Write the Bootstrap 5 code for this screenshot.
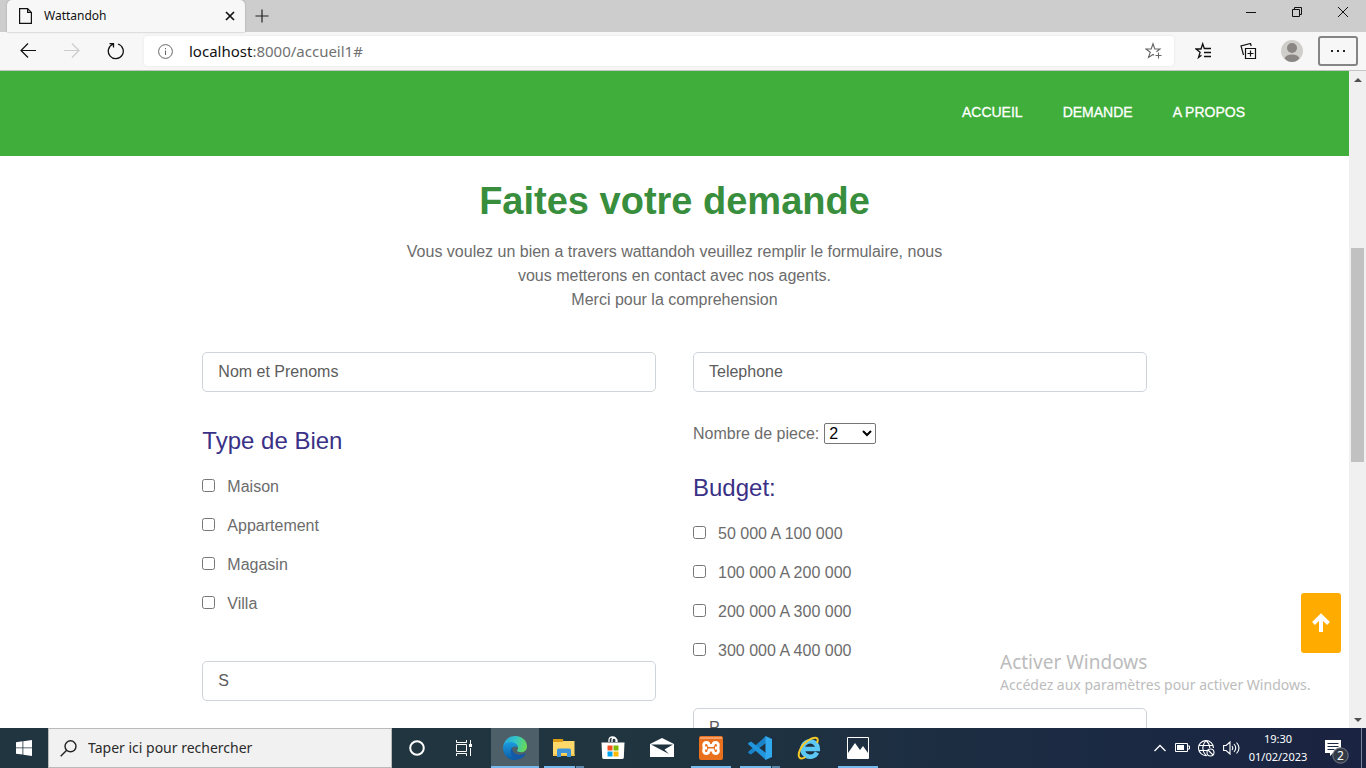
<!DOCTYPE html>
<html lang="fr">
<head>
<meta charset="utf-8">
<meta name="viewport" content="width=device-width, initial-scale=1">
<title>Wattandoh</title>
<link href="https://cdn.jsdelivr.net/npm/bootstrap@5.3.0/dist/css/bootstrap.min.css" rel="stylesheet">
<style>
  body { font-family: "Liberation Sans", Arial, sans-serif; font-size: 16px; line-height: 24px; color: #6c6c6c; background: #fff; }
  svg { display: block; flex: none; }
  .shell-ui { font-family: "Noto Sans", "Open Sans", sans-serif; }
  .plain-btn { border: 0; background: none; padding: 0; color: inherit; display: flex; align-items: center; justify-content: center; }

  /* browser window */
  .tab-strip { height: 32px; background: #cdcdcd; color: #111; }
  .browser-tab { width: 238px; margin-left: 7px; padding: 0 8px 0 12px; background: #f7f7f7; border-radius: 5px 5px 0 0; font-size: 12px; box-shadow: 0 0 2px #999; }
  .new-tab { width: 34px; }
  .win-btn { width: 46px; height: 23px; }
  .tool-bar { height: 39px; background: #f7f7f7; border-bottom: 1px solid #c4c4c4; color: #111; }
  .nav-group { padding-left: 6px; }
  .nav-btn { width: 44px; height: 32px; }
  .address { height: 30px; margin-left: 6px; padding: 0 11px 0 14px; background: #fff; border-radius: 4px; box-shadow: 0 0 3px #e4e4e4; color: #717171; }
  .address-text { font-size: 15px; color: #717171; text-decoration: none; }
  .address-text b { font-weight: 400; color: #111; }
  .more-btn { width: 40px; height: 30px; border: 2px solid #858585; border-radius: 3px; margin: 0 8px 0 4px; }

  /* site */
  .site-header { height: 85px; background: #3fae3a; padding: 0 84px 4px; }
  .site-header .nav-link { color: #fff; font-size: 14px; padding: 0 20px; line-height: 20px; -webkit-text-stroke: .3px #fff; }
  .page-title { font-size: 38px; line-height: 46px; font-weight: 700; color: #388e3c; margin: 22px 0 16px; }
  .intro { max-width: 570px; margin: 0 auto 40px; }
  .request-form { width: 70%; margin: 0 auto; grid-template-columns: 1fr 1fr; gap: 37px; }
  .request-form .form-control { height: 40px; padding: 6px 15px; border: 1px solid #ced4da; border-radius: 5px; color: #5c5c5c; }
  .request-form .form-control::placeholder { color: #5c5c5c; opacity: 1; }
  .group-title { font-size: 24px; line-height: 29px; font-weight: 400; color: #3a3187; margin: 0 0 20px; float: none; }
  .type-group { margin-top: 34px; margin-bottom: 45px; }
  .budget-group { margin-top: 27px; margin-bottom: 45px; }
  .choices { gap: 15px; }
  .choice { gap: 12px; }
  .choice input { width: 13px; height: 13px; margin: 0 0 4px; }
  .rooms { margin-top: 30px; gap: 5px; height: 24px; }
  .rooms select { width: 52px; height: 21px; margin-bottom: 2px; font-size: 16px; padding: 0; color: #000; background: #fff; border: 1px solid #767676; border-radius: 2px; }
  .page-overlay { right: 17px; }
  .to-top { right: 8px; bottom: 75px; width: 40px; height: 60px; background: #ffab00; border-radius: 3px; }
  .watermark { right: 0; bottom: 32px; width: 349px; color: #bcbcbc; font-size: 14px; line-height: 22px; }
  .watermark-title { font-size: 19px; line-height: 24px; }
  .scroll-bar { width: 17px; background: #f0f0f0; }
  .scroll-end { height: 17px; }
  .scroll-thumb { background: #c1c1c1; margin: 0 2px; }

  /* taskbar */
  .task-bar { height: 40px; background: linear-gradient(90deg, #20353f 0, #20353f 45%, #1b2a43 80%, #1a2341); color: #fff; }
  .task-list { gap: 1px; }
  .task-btn { width: 48px; height: 40px; position: relative; flex: none; }
  .task-btn.active { background: #4d5f69; }
  .task-btn.running::after { content: ""; position: absolute; left: 4px; right: 4px; bottom: 0; height: 2px; background: #76b9ed; }
  .task-btn.active::after { left: 0; right: 0; }
  .task-btn.multi::after { background: linear-gradient(90deg, #76b9ed 31px, #20353f 31px, #20353f 32px, #5887ab 32px); }
  .task-search { width: 344px; background: #f1f1f1; border: 1px solid #bababa; margin-right: 1px; color: #222; padding-left: 11px; gap: 11px; }
  .task-search input { border: 0; background: none; outline: 0; font-size: 14px; padding: 0; color: #222; }
  .task-search input::placeholder { color: #2b2b2b; opacity: 1; }
  .tray { gap: 8px; padding-right: 4px; }
  .clock { font-size: 11px; line-height: 18px; width: 60px; }
  .notice { width: 26px; height: 30px; margin: 0 3px 0 8px; }
  .desk-edge { width: 1px; height: 40px; background: #7a8294; }
</style>
</head>
<body>
<div class="d-flex flex-column vh-100 overflow-hidden">

  <header class="shell-ui flex-shrink-0">
    <div class="tab-strip d-flex">
      <div class="browser-tab d-flex align-items-center">
        <svg width="13" height="16" viewBox="0 0 13 16" fill="none" stroke="#111" stroke-width="1.2"><path d="M.6.6h8L12.400 4.400v11H.6zM8.600.6v3.800h3.800"/></svg>
        <span class="ms-2 ps-1 flex-grow-1">Wattandoh</span>
        <button class="plain-btn" aria-label="Fermer l'onglet"><svg width="14" height="14" viewBox="0 0 14 14" stroke="#111" stroke-width="1.700"><path d="M3 3l8 8M11 3l-8 8"/></svg></button>
      </div>
      <button class="plain-btn new-tab" aria-label="Nouvel onglet"><svg width="14" height="14" viewBox="0 0 14 14" stroke="#222" stroke-width="1.200"><path d="M7 .5v13M.5 7h13"/></svg></button>
      <div class="d-flex ms-auto">
        <button class="plain-btn win-btn" aria-label="Réduire"><svg width="10" height="10" stroke="#111"><path d="M0 5.500h10"/></svg></button>
        <button class="plain-btn win-btn" aria-label="Restaurer"><svg width="10" height="10" fill="none" stroke="#111"><path d="M.5 2.500h7v7h-7zM2.500 2.500v-2h7v7h-2"/></svg></button>
        <button class="plain-btn win-btn" aria-label="Fermer"><svg width="10" height="10" stroke="#111"><path d="M0 0l10 10M10 0L0 10"/></svg></button>
      </div>
    </div>
    <div class="tool-bar d-flex align-items-center">
      <div class="nav-group d-flex">
        <button class="plain-btn nav-btn" aria-label="Précédent"><svg width="16" height="16" viewBox="0 0 16 16" fill="none" stroke="#111" stroke-width="1.200"><path d="M16 7.500H1M8 .5L1 7.500l7 7"/></svg></button>
        <button class="plain-btn nav-btn" aria-label="Suivant"><svg width="16" height="16" viewBox="0 0 16 16" fill="none" stroke="#ccc" stroke-width="1.200"><path d="M0 7.500h15M8 .5l7 7-7 7"/></svg></button>
        <button class="plain-btn nav-btn" aria-label="Actualiser"><svg width="18" height="18" viewBox="0 0 18 18" fill="none" stroke="#111" stroke-width="1.300"><path d="M11 2a7.500 7.500 0 1 1-5 .2M2.500 1.600H6.500V5.600"/></svg></button>
      </div>
      <div class="address d-flex align-items-center flex-grow-1">
        <svg width="15" height="15" viewBox="0 0 15 15" fill="none" stroke="#666"><circle cx="7.500" cy="7.500" r="6.900"/><path d="M7.500 6.500v4.500M7.500 4v1.200"/></svg>
        <a href="#" class="address-text ms-3 flex-grow-1"><b>localhost</b>:8000/accueil1#</a>
        <button class="plain-btn" aria-label="Ajouter aux favoris"><svg width="18" height="18" viewBox="0 0 18 18" fill="none" stroke="#666" stroke-width="1.100"><path d="M9 13.300l-1-.8L3.500 15.500l1.800-5.300L1 7h5.200L8 1.800 9.800 7H15l-3.600 2.800M13.500 10.500v6M10.500 13.500h6"/></svg></button>
      </div>
      <button class="plain-btn nav-btn ms-2" aria-label="Favoris"><svg width="18" height="18" viewBox="0 0 18 18" fill="none" stroke="#111" stroke-width="1.300"><path d="M6.500 13.300L3.500 15.500l1.600-5.300L1 7h5L7.700 1.800 9.300 6.500H16M9 10.500H16M9 14.500H16"/></svg></button>
      <button class="plain-btn nav-btn" aria-label="Collections"><svg width="17" height="17" viewBox="0 0 17 17" fill="none" stroke="#111" stroke-width="1.200"><path d="M5.500 5.500h10v10h-10zM10.500 7.500v6M7.500 10.500h6M3.500 12L1 3l9.500-2.500.7 2.500"/></svg></button>
      <button class="plain-btn nav-btn" aria-label="Profil"><svg width="22" height="22" viewBox="0 0 22 22"><circle cx="11" cy="11" r="11" fill="#d0cecb"/><circle cx="11" cy="8" r="5" fill="#8a8683"/><path d="M3.500 18.500Q5 14.500 11 14.500t7.500 4Q15 22 11 22t-7.500-3.500z" fill="#8a8683"/></svg></button>
      <button class="plain-btn more-btn" aria-label="Paramètres"><svg width="14" height="2" fill="#222"><path d="M0 0h2v2H0zM6 0h2v2H6zM12 0h2v2h-2z"/></svg></button>
    </div>
  </header>

  <div class="d-flex flex-grow-1 overflow-hidden position-relative">
    <main class="flex-grow-1 overflow-hidden">
      <div class="site-header d-flex align-items-center">
        <nav class="nav ms-auto" aria-label="Menu principal">
          <a class="nav-link" href="#">ACCUEIL</a>
          <a class="nav-link" href="#">DEMANDE</a>
          <a class="nav-link" href="#">A PROPOS</a>
        </nav>
      </div>
      <div class="text-center">
        <h1 class="page-title">Faites votre demande</h1>
        <p class="intro">Vous voulez un bien a travers wattandoh veuillez remplir le formulaire, nous vous metterons en contact avec nos agents.<br>Merci pour la comprehension</p>
      </div>
      <form class="request-form d-grid">
        <div>
          <input class="form-control" type="text" placeholder="Nom et Prenoms" aria-label="Nom et Prenoms">
          <fieldset class="type-group">
            <legend class="group-title">Type de Bien</legend>
            <div class="choices d-flex flex-column">
              <label class="choice d-flex align-items-center"><input type="checkbox">Maison</label>
              <label class="choice d-flex align-items-center"><input type="checkbox">Appartement</label>
              <label class="choice d-flex align-items-center"><input type="checkbox">Magasin</label>
              <label class="choice d-flex align-items-center"><input type="checkbox">Villa</label>
            </div>
          </fieldset>
          <input class="form-control" type="text" placeholder="S" aria-label="S">
        </div>
        <div>
          <input class="form-control" type="tel" placeholder="Telephone" aria-label="Telephone">
          <div class="rooms d-flex align-items-center">
            <label for="rooms">Nombre de piece:</label>
            <select id="rooms"><option>2</option></select>
          </div>
          <fieldset class="budget-group">
            <legend class="group-title">Budget:</legend>
            <div class="choices d-flex flex-column">
              <label class="choice d-flex align-items-center"><input type="checkbox">50 000 A 100 000</label>
              <label class="choice d-flex align-items-center"><input type="checkbox">100 000 A 200 000</label>
              <label class="choice d-flex align-items-center"><input type="checkbox">200 000 A 300 000</label>
              <label class="choice d-flex align-items-center"><input type="checkbox">300 000 A 400 000</label>
            </div>
          </fieldset>
          <input class="form-control" type="text" placeholder="P" aria-label="P">
        </div>
      </form>
    </main>

    <div class="page-overlay position-absolute top-0 bottom-0 start-0 pe-none">
      <button class="plain-btn to-top position-absolute pe-auto" aria-label="Haut de page"><svg width="18" height="20" viewBox="0 0 18 20" fill="none" stroke="#fff" stroke-width="4"><path d="M9 19V3M1.500 10.500L9 3l7.500 7.500"/></svg></button>
      <div class="watermark shell-ui position-absolute">
        <div class="watermark-title">Activer Windows</div>
        <div>Accédez aux paramètres pour activer Windows.</div>
      </div>
    </div>

    <div class="scroll-bar d-flex flex-column flex-shrink-0" aria-hidden="true">
      <div class="scroll-end d-flex align-items-center justify-content-center"><svg width="8" height="4" fill="#505050"><path d="M0 4l4-4 4 4z"/></svg></div>
      <div style="flex:160"></div>
      <div class="scroll-thumb" style="flex:214"></div>
      <div style="flex:249"></div>
      <div class="scroll-end d-flex align-items-center justify-content-center"><svg width="8" height="4" fill="#505050"><path d="M0 0l4 4 4-4z"/></svg></div>
    </div>
  </div>

  <footer class="task-bar shell-ui d-flex flex-shrink-0">
    <button class="plain-btn task-btn" aria-label="Démarrer"><svg width="16" height="16" viewBox="0 0 16 16" fill="#fff"><path d="M0 2.200l6.500-.9v6.200H0zM7.300 1.200L16 0v7.500H7.300zM0 8.300h6.500v6.300L0 13.700zM7.300 8.300H16V16l-8.700-1.200z"/></svg></button>
    <label class="task-search d-flex align-items-center">
      <svg width="17" height="17" viewBox="0 0 17 17" fill="none" stroke="#222" stroke-width="1.400"><circle cx="10.500" cy="6.300" r="5.500"/><path d="M6.700 10.300L.7 16.300"/></svg>
      <input class="flex-grow-1" type="text" placeholder="Taper ici pour rechercher" aria-label="Rechercher">
    </label>
    <div class="task-list d-flex">
      <button class="plain-btn task-btn" aria-label="Cortana"><svg width="16" height="16" viewBox="0 0 16 16" fill="none" stroke="#fff" stroke-width="2"><circle cx="8" cy="8" r="6.800"/></svg></button>
      <button class="plain-btn task-btn pe-1" aria-label="Affichage des tâches"><svg width="16" height="16" viewBox="0 0 16 16" fill="none" stroke="#fff"><path d="M.5 4.500h10v7H.5zM.5 0v2.500h10V0M.5 16v-2.500h10V16M14.500 0v4M14.500 8v8"/><path d="M13 4h3v3h-3z" fill="#fff" stroke="none"/></svg></button>
      <button class="plain-btn task-btn active running" aria-label="Edge"><svg width="24" height="24" viewBox="0 0 24 24"><defs><linearGradient id="eg" x1="0" x2="1" y1=".3" y2=".5"><stop stop-color="#25a7dc"/><stop offset=".5" stop-color="#35c6c6"/><stop offset="1" stop-color="#68da55"/></linearGradient><linearGradient id="eb" x1="0" x2="0" y1="0" y2="1"><stop stop-color="#1c9de0"/><stop offset="1" stop-color="#0c59a4"/></linearGradient></defs><path fill="url(#eg)" d="M.2 10.500C1 4.500 5.800 0 12 0c7 0 12 4.800 12 10.300 0 4-3 6-6 6-2.500 0-4-.9-4-1.700 0-.7 1-.9 1-2.700C15 9.500 12.500 7.500 9 7.500c-4 0-7 1.200-8.800 3z"/><path fill="url(#eb)" d="M0 12C0 8.500 3.500 6 7.500 6c4 0 7.300 2.300 7.500 5.500-2.800-2.200-6.800-.5-6.800 3.500 0 4.500 4.500 7.500 9 5.500-1.500 2-3.500 3.500-5.700 3.500C5 24 0 18.500 0 12z"/><path fill="#1259a8" d="M9 11.500c-3.500 5 .5 12 6 12 3.500-.7 6-2.800 7.700-5.500.3-.5-.1-.8-.6-.5C16 20.500 8.500 18 9 11.500z"/></svg></button>
      <button class="plain-btn task-btn running multi" aria-label="Explorateur"><svg width="22" height="20" viewBox="0 0 22 20"><path fill="#ffd86a" d="M0 3h21.500v15H0z"/><path fill="#dc9b14" d="M0 1h9.500l1 1-1 2H0z"/><path fill="#f4c64c" d="M0 16h21.500v2H0z"/><path fill="#3d93da" d="M4 19v-7q0-1.500 1.500-1.500h11q1.500 0 1.500 1.500v7h-4v-4H8v4z"/></svg></button>
      <button class="plain-btn task-btn" aria-label="Microsoft Store"><svg width="24" height="24" viewBox="0 0 24 24"><path fill="none" stroke="#fff" stroke-width="1.300" d="M8 6V4q0-3 3.500-3T15 4v2M11 6V4q0-2 2-2t3 2v2"/><path fill="#fff" d="M.5 6.500h23l-.7 15q-.1 1.500-1.600 1.500H2.800q-1.500 0-1.600-1.500z"/><path fill="#f25022" d="M6.500 9.500h5v5h-5z"/><path fill="#7fba00" d="M12.500 9.500h5v5h-5z"/><path fill="#00a4ef" d="M6.500 15.500h5v5h-5z"/><path fill="#ffb900" d="M12.500 15.500h5v5h-5z"/></svg></button>
      <button class="plain-btn task-btn" aria-label="Courrier"><svg width="24" height="20" viewBox="0 0 24 20"><path fill="#fff" d="M0 6L12 0l12 6v13H0z"/><path fill="#20333f" d="M1 6.500h22L14.500 11.500l4.500 4.500L1 6.500z"/></svg></button>
      <button class="plain-btn task-btn running" aria-label="XAMPP"><svg width="24" height="24" viewBox="0 0 24 24"><rect width="24" height="24" rx="2" fill="#e9701d"/><path d="M1 1h22v2H1z" fill="#f4a06a"/><path fill="none" stroke="#fff" stroke-width="2.800" stroke-linejoin="round" d="M5 12Q3.500 6.500 7.500 6.500q2.500 0 2.500 3h4q0-3 2.500-3Q20.500 6.500 19 12q1.500 5.500-2.500 5.500-2.500 0-2.500-3.500h-4q0 3.500-2.500 3.500Q3.500 17.500 5 12zM5 12h3M16 12h3"/></svg></button>
      <button class="plain-btn task-btn running multi" aria-label="Visual Studio Code"><svg width="24" height="24" viewBox="0 0 24 24"><path fill="#1b83c8" d="M18 0v7L3 18.500.3 17q-.5-.7 0-1.300z"/><path fill="#2196dc" d="M3 5.500L18 17v7L.3 8.300q-.5-.6 0-1.300z"/><path fill="#31a9ef" d="M17.500 0L24 3v18l-6.500 3z"/></svg></button>
      <button class="plain-btn task-btn" aria-label="Internet Explorer"><svg width="24" height="24" viewBox="0 0 24 24" fill="none"><path stroke="#5cc8f5" stroke-width="4.500" d="M20 16.500a7.700 7.700 0 1 1 .8-3.500H6.500"/><path stroke="#f8ca28" stroke-width="2" d="M20 7c3-7-4-6-9-2.500C4 9 0 18 2.500 21.500c1.500 1.800 4.500.5 6-.5"/></svg></button>
      <button class="plain-btn task-btn running" aria-label="Photos"><svg width="22" height="22" viewBox="0 0 22 22"><path fill="none" stroke="#fff" d="M.5.5h21v21H.5z"/><path fill="#fff" d="M1 16L8 6l5 7 3-4 5 7v5H1z"/></svg></button>
    </div>
    <div class="tray d-flex align-items-center ms-auto">
      <button class="plain-btn" aria-label="Icônes cachées"><svg width="12" height="8" viewBox="0 0 12 8" fill="none" stroke="#fff" stroke-width="1.300"><path d="M.5 7L6 1.500 11.500 7"/></svg></button>
      <svg width="16" height="10" viewBox="0 0 16 10" fill="none" stroke="#fff"><path d="M1.500.5h12v8h-12zM14 3h1.500v3H14"/><path d="M3 2h7v5H3z" fill="#fff" stroke="none"/></svg>
      <svg width="17" height="17" viewBox="0 0 17 17" fill="none" stroke="#fff" stroke-width="1.100"><path d="M9 15.500A7.500 7.500 0 1 1 15.500 8M1 5.500h14M1 10.500h8M8 .5Q1.500 8 8 15.500M8 .5Q12 4 11.700 8"/><circle cx="12.500" cy="12.500" r="3.500"/><path d="M10 10l5 5"/></svg>
      <svg width="17" height="16" viewBox="0 0 17 16" fill="none" stroke="#fff" stroke-width="1.100"><path d="M.6 5.500h2.500L7 2v12L3.100 10.500H.6zM9 6q1.500 2 0 4M11 4q3.500 4 0 8M13.500 2.500q5 5.500 0 11"/></svg>
      <div class="clock text-center">19:30<br>01/02/2023</div>
      <button class="plain-btn notice" aria-label="Notifications"><svg width="26" height="32" viewBox="0 0 26 32"><path fill="#fff" d="M1 8h16v13H9l-3 3v-3H1z"/><path stroke="#1a2742" d="M3.500 11.500h11M3.500 14.500h11M3.500 17.500h7"/><circle cx="16.500" cy="23.500" r="7.700" fill="#343a45" stroke="#777d88"/><text x="16.500" y="28" text-anchor="middle" font-size="12" fill="#fff">2</text></svg></button>
      <div class="desk-edge"></div>
    </div>
  </footer>
</div>
<script src="https://cdn.jsdelivr.net/npm/bootstrap@5.3.0/dist/js/bootstrap.bundle.min.js"></script>
</body>
</html>
